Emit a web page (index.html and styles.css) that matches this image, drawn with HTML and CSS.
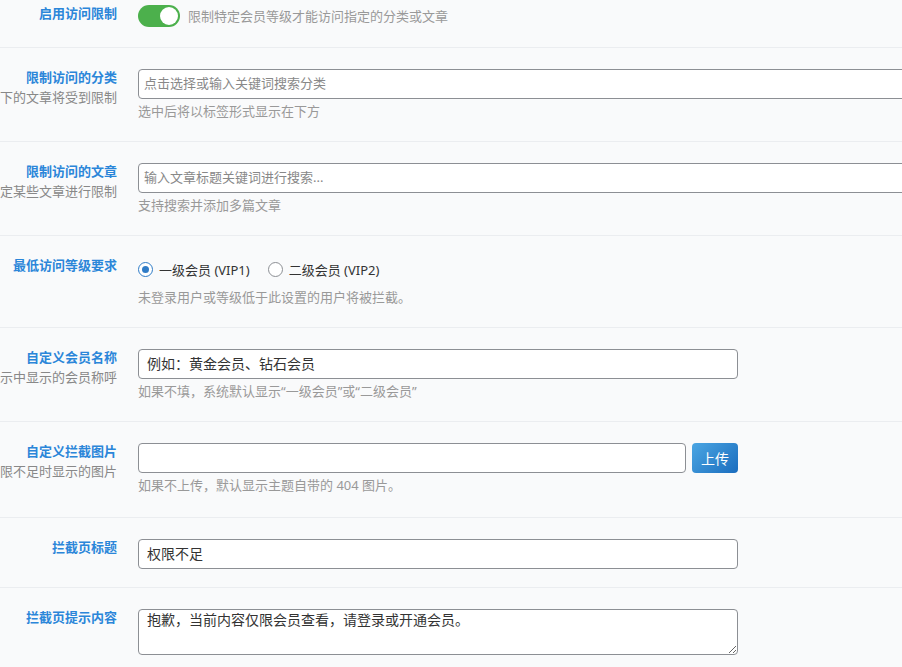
FILE: index.html
```html
<!DOCTYPE html>
<html>
  <head>
    <meta name="viewport" content="width=device-width, initial-scale=1" />
    <link rel="stylesheet" href="styles.css">
  </head>
  <body>
    <!-- Access restriction settings -->
    <div class="settings">
      <div class="row row-first">
        <div class="label">
          <span class="title">启用访问限制</span>
        </div>
        <div class="field field-inline">
          <span class="switch"><span class="knob"></span></span>
          <span class="hint">限制特定会员等级才能访问指定的分类或文章</span>
        </div>
      </div>

      <div class="row">
        <div class="label">
          <span class="title">限制访问的分类</span>
          <span class="sub">选择后，该分类下的文章将受到限制</span>
        </div>
        <div class="field">
          <input type="text" class="input input-wide" placeholder="点击选择或输入关键词搜索分类" />
          <p class="desc">选中后将以标签形式显示在下方</p>
        </div>
      </div>

      <div class="row">
        <div class="label">
          <span class="title">限制访问的文章</span>
          <span class="sub">可单独指定某些文章进行限制</span>
        </div>
        <div class="field">
          <input type="text" class="input input-wide" placeholder="输入文章标题关键词进行搜索..." />
          <p class="desc">支持搜索并添加多篇文章</p>
        </div>
      </div>

      <div class="row">
        <div class="label">
          <span class="title">最低访问等级要求</span>
        </div>
        <div class="field">
          <div class="radios">
            <label class="radio"><span class="dot checked"></span>一级会员 (VIP1)</label>
            <label class="radio"><span class="dot"></span>二级会员 (VIP2)</label>
          </div>
          <p class="desc desc-radio">未登录用户或等级低于此设置的用户将被拦截。</p>
        </div>
      </div>

      <div class="row row-name">
        <div class="label">
          <span class="title">自定义会员名称</span>
          <span class="sub">在拦截提示中显示的会员称呼</span>
        </div>
        <div class="field">
          <input type="text" class="input" value="例如：黄金会员、钻石会员" />
          <p class="desc">如果不填，系统默认显示“一级会员”或“二级会员”</p>
        </div>
      </div>

      <div class="row row-image">
        <div class="label">
          <span class="title">自定义拦截图片</span>
          <span class="sub">权限不足时显示的图片</span>
        </div>
        <div class="field">
          <div class="upload">
            <input type="text" class="input input-short" />
            <button type="button" class="btn">上传</button>
          </div>
          <p class="desc">如果不上传，默认显示主题自带的 404 图片。</p>
        </div>
      </div>

      <div class="row row-title">
        <div class="label">
          <span class="title">拦截页标题</span>
        </div>
        <div class="field">
          <input type="text" class="input" value="权限不足" />
        </div>
      </div>

      <div class="row row-last">
        <div class="label">
          <span class="title">拦截页提示内容</span>
        </div>
        <div class="field">
          <textarea class="input textarea">抱歉，当前内容仅限会员查看，请登录或开通会员。</textarea>
        </div>
      </div>
    </div>
  </body>
</html>
```

FILE: styles.css
```css
body {
  margin: 0;
  background: #f9fafb;
  font-family: "Noto Sans", "Noto Sans CJK SC", sans-serif;
  font-size: 13px;
  color: #333;
  overflow: hidden;
}

.settings {
  width: 902px;
}

.row {
  display: flex;
  gap: 21px;
  padding: 21px 0 20px;
  border-bottom: 1px solid #ebedf0;
  background: #f9fafb;
}

.row-first {
  padding: 5px 0 19px;
  height: 23px;
}

.row-name {
  padding-bottom: 20px;
}

.row-image {
  padding-bottom: 22px;
}

.row-title {
  padding-bottom: 18px;
}

.row-last {
  border-bottom: none;
}

/* label column: right aligned, long text runs off the left edge */
.label {
  width: 117px;
  flex-shrink: 0;
  display: flex;
  flex-direction: column;
  align-items: flex-end;
  line-height: 20px;
  margin-top: -2px;
  white-space: nowrap;
}

.title {
  font-weight: bold;
  color: #2b86d9;
}

.sub {
  color: #888;
}

.field {
  flex: 1;
  min-width: 0;
}

.field-inline {
  display: flex;
  align-items: center;
  gap: 8px;
  height: 22px;
}

.hint {
  color: #999;
  margin-top: -2px;
}

.switch {
  width: 42px;
  height: 22px;
  border-radius: 11px;
  background: #4cb04c;
  display: flex;
  align-items: center;
  justify-content: flex-end;
  padding: 0 2px;
  box-sizing: border-box;
}

.knob {
  width: 18px;
  height: 18px;
  border-radius: 50%;
  background: #fff;
}

.input {
  display: block;
  width: 600px;
  height: 30px;
  margin: 0;
  padding: 0 8px 3px;
  border: 1px solid #8c8f94;
  border-radius: 4px;
  background: #fff;
  font-family: "Noto Sans", "Noto Sans CJK SC", sans-serif;
  font-size: 14px;
  color: #333;
  box-sizing: border-box;
  outline: none;
}

.input::placeholder {
  color: #888;
  font-size: 13px;
}

.input-wide {
  width: 800px;
  padding-left: 5px;
}

.input-short {
  width: 548px;
}

.textarea {
  height: 46px;
  padding: 0 8px;
  line-height: 20px;
  resize: vertical;
}

.desc {
  margin: 2px 0 0;
  line-height: 20px;
  color: #999;
}

.desc-radio {
  margin-top: 6px;
}

.upload {
  display: flex;
  gap: 6px;
}

.btn {
  width: 46px;
  height: 30px;
  border: none;
  border-radius: 4px;
  background: linear-gradient(135deg, #4ba6e3, #1b6dbe);
  color: #fff;
  font-family: "Noto Sans CJK SC", sans-serif;
  font-size: 14px;
  padding: 0;
  cursor: pointer;
}

.radios {
  display: flex;
  gap: 18px;
  height: 24px;
  align-items: center;
}

.radio {
  display: flex;
  align-items: center;
  gap: 6px;
  font-size: 13px;
  color: #333;
}

.dot {
  width: 15px;
  height: 15px;
  border: 1px solid #8c8f94;
  border-radius: 50%;
  box-sizing: border-box;
  background: #fff;
  display: flex;
  align-items: center;
  justify-content: center;
}

.dot.checked {
  border-color: #2f7cc7;
}

.dot.checked::after {
  content: "";
  width: 7px;
  height: 7px;
  border-radius: 50%;
  background: #2f7cc7;
}
```
